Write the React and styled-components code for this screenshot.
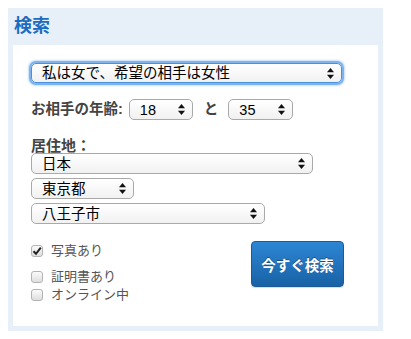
import styled, { createGlobalStyle } from 'styled-components';

const FONT = `"Liberation Sans", "Noto Sans CJK JP", sans-serif`;

const GlobalStyle = createGlobalStyle`
  body {
    margin: 8px;
    background: #ffffff;
    font-family: ${FONT};
  }
`;

function Arrows() {
  return (
    <ArrowIcon width="7" height="11" viewBox="0 0 7 11">
      <path d="M3.5 0 L7 4.3 L0 4.3 Z" fill="#111" />
      <path d="M3.5 11 L7 6.7 L0 6.7 Z" fill="#111" />
    </ArrowIcon>
  );
}

function SelectBox({ value, width, height = 21, focused }) {
  return (
    <Select $width={width} $height={height} $focused={focused}>
      <SelectText>{value}</SelectText>
      <Arrows />
    </Select>
  );
}

function Check({ label, checked }) {
  return (
    <CheckRow>
      <Box>
        {checked && (
          <svg width="10" height="10" viewBox="0 0 10 10">
            <path d="M1.5 5.2 L4 7.8 L8.8 1.6" stroke="#222" strokeWidth="2" fill="none" />
          </svg>
        )}
      </Box>
      <CheckLabel>{label}</CheckLabel>
    </CheckRow>
  );
}

export default function App() {
  return (
    <>
      <GlobalStyle />
      <Panel>
        <Title>検索</Title>
        <Inner>
          <SelectBox value="私は女で、希望の相手は女性" width={311} height={20} focused />
          <AgeRow>
            <Label>お相手の年齢:</Label>
            <SelectBox value="18" width={64} />
            <Joiner>と</Joiner>
            <SelectBox value="35" width={65} />
          </AgeRow>
          <SectionLabel>居住地：</SectionLabel>
          <Stack>
            <SelectBox value="日本" width={282} />
            <SelectBox value="東京都" width={103} />
            <SelectBox value="八王子市" width={234} />
          </Stack>
          <BottomRow>
            <Checks>
              <Check label="写真あり" checked />
              <Spacer />
              <Check label="証明書あり" />
              <Check label="オンライン中" />
            </Checks>
            <SearchButton>今すぐ検索</SearchButton>
          </BottomRow>
        </Inner>
      </Panel>
    </>
  );
}

const Panel = styled.div`
  width: 375px;
  background: #e7eff8;
  padding: 0 5px 5px;
  box-sizing: border-box;
`;

const Title = styled.h2`
  margin: 0;
  height: 37px;
  padding: 7px 0 0 1px;
  box-sizing: border-box;
  font-size: 18px;
  line-height: 22px;
  font-weight: bold;
  color: #1b6cc0;
`;

const Inner = styled.div`
  background: #ffffff;
  padding: 18px 34px 22px 18px;
  display: flex;
  flex-direction: column;
`;

const Select = styled.div`
  width: ${(p) => p.$width}px;
  height: ${(p) => p.$height}px;
  box-sizing: border-box;
  display: flex;
  align-items: center;
  justify-content: space-between;
  padding: 0 7px 0 10px;
  border: 1px solid ${(p) => (p.$focused ? '#4a90dc' : '#a9a9a9')};
  border-radius: 5px;
  background: linear-gradient(#ffffff, #f1f1f1);
  box-shadow: ${(p) =>
    p.$focused ? '0 0 0 2px #7db3ee, 0 0 2px 3px rgba(125, 179, 238, 0.45)' : 'none'};
`;

const SelectText = styled.span`
  font-size: 14.5px;
  line-height: 18px;
  color: #000;
  white-space: nowrap;
`;

const ArrowIcon = styled.svg`
  flex: none;
`;

const AgeRow = styled.div`
  display: flex;
  align-items: center;
  gap: 6px;
  margin-top: 16px;
`;

const Label = styled.span`
  font-size: 14.5px;
  line-height: 21px;
  font-weight: bold;
  color: #444;
  white-space: nowrap;
`;

const Joiner = styled(Label)`
  margin: 0 4px 0 5px;
`;

const SectionLabel = styled.div`
  margin-top: 19px;
  font-size: 15px;
  line-height: 14px;
  font-weight: bold;
  color: #444;
`;

const Stack = styled.div`
  display: flex;
  flex-direction: column;
  gap: 4px;
`;

const BottomRow = styled.div`
  display: flex;
  justify-content: space-between;
  align-items: flex-start;
  margin-top: 17px;
`;

const Checks = styled.div`
  display: flex;
  flex-direction: column;
  padding-top: 1px;
`;

const Spacer = styled.div`
  height: 8px;
`;

const CheckRow = styled.div`
  display: flex;
  align-items: center;
  gap: 8px;
  height: 18px;
`;

const Box = styled.span`
  width: 12px;
  height: 12px;
  box-sizing: border-box;
  border: 1px solid #b3b3b3;
  border-radius: 3px;
  background: linear-gradient(#fbfbfb, #dedede);
  display: flex;
  align-items: center;
  justify-content: center;
`;

const CheckLabel = styled.span`
  font-size: 13px;
  line-height: 18px;
  color: #555;
`;

const SearchButton = styled.button`
  width: 93px;
  height: 46px;
  border: 1px solid #1a5b97;
  border-radius: 4px;
  background: linear-gradient(#2d86d3, #1862a6);
  color: #fff;
  font-family: ${FONT};
  font-size: 14.5px;
  font-weight: bold;
  text-shadow: 0 -1px 0 rgba(0, 0, 0, 0.35);
  padding: 0;
  box-shadow: 0 1px 1px rgba(0, 0, 0, 0.15);
`;
